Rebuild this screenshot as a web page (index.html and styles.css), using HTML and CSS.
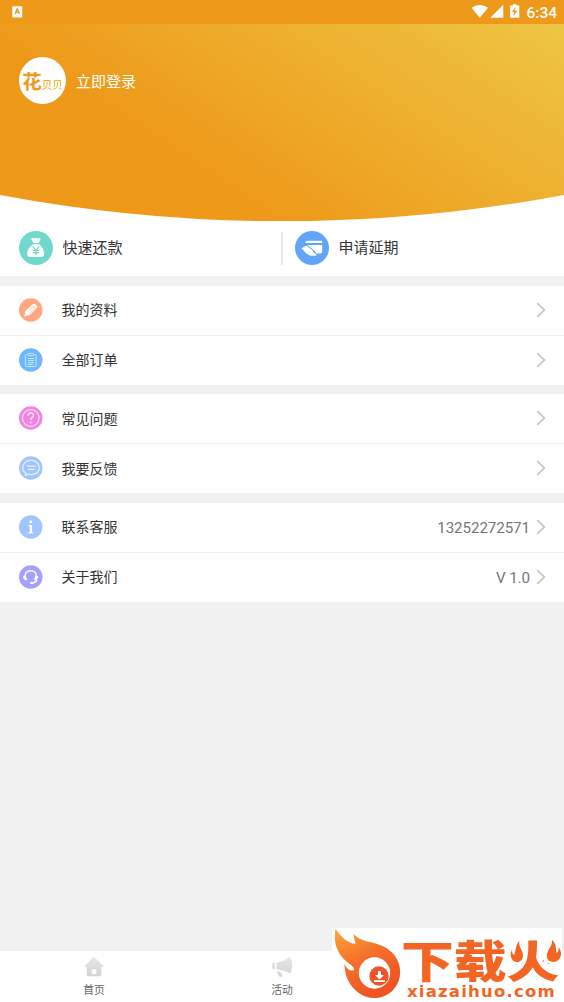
FILE: index.html
```html
<!DOCTYPE html>
<html lang="zh-CN">
<head>
<meta charset="utf-8">
<title>我的</title>
<link rel="stylesheet" href="styles.css">
</head>
<body>
<svg class="defs" width="0" height="0"><defs>
  <symbol id="chevron" viewBox="0 0 10 16"><path d="M1.2 1.200 8.400 8l-7.200 6.800" fill="none" stroke="#c8c8c8" stroke-width="1.800"/></symbol>
  <linearGradient id="grey" x2="0" y2="1"><stop stop-color="#e6e6e6"/><stop offset="1" stop-color="#d4d4d4"/></linearGradient>
</defs></svg>
<div class="screen">
  <header class="status">
    <svg width="11" height="12" viewBox="0 0 11 12"><rect x=".2" y=".2" width="10" height="11.3" rx="1" fill="#fff"/><path d="M3.200 8 5 3h.6l1.800 5M4 6.400h2.700" fill="none" stroke="#ee9919" stroke-width="1.300"/></svg>
    <div class="status-right">
      <svg width="49" height="15" viewBox="0 0 49 15" fill="#fff"><path d="M.5 3.800C5.300-.1 12.300-.1 17.100 3.800L8.800 13.800zM32.300.8v12.900H19.300zM41.800 1.500V.3h3.800v1.200h2.700v12.200h-9.200V1.500z"/><path d="m44.400 3-3.400 5h2l-.4 4 3.700-5.300h-2.200z" fill="#ee9919"/></svg>
      <span class="clock">6:34</span>
    </div>
  </header>

  <section class="hero">
    <svg class="hero-bg" width="564" height="198" viewBox="0 23.500 564 198"><defs><linearGradient id="sun" gradientUnits="userSpaceOnUse" x1="170" y1="150" x2="347" y2="-117"><stop stop-color="#ee9919"/><stop offset="1" stop-color="#eec544"/></linearGradient></defs><path d="M0 23.500H564V194.500Q282 247 0 194.500z" fill="url(#sun)"/></svg>
    <div class="profile">
      <div class="avatar"><span class="logo-main">花</span><span class="logo-sub">贝贝</span></div>
      <span class="login">立即登录</span>
    </div>
  </section>

  <section class="quick">
    <a class="quick-item">
      <svg width="34" height="34" viewBox="0 0 34 34"><circle cx="17" cy="17" r="17" fill="#6fd9cc"/><path d="M12 7.600q1.500-1 3 0 1.800-1.200 3.600 0 1.700-1 3.200-.1L19.800 12h-5.400z" fill="#fff"/><path d="M14 13.200h6.200c3 2.400 5.200 6 5 9.800q-.1 3-3 3H11.300q-3.200 0-3.200-3c0-4 2.700-7.600 5.900-9.800z" fill="#fff"/><path d="m13.700 15.400 3.200 4 3.200-4M13.500 19.500h6.800M13.500 21.700h6.800M16.900 19v5" fill="none" stroke="#6fd9cc" stroke-width="1.200"/></svg>
      <span>快速还款</span>
    </a>
    <i class="divider"></i>
    <a class="quick-item">
      <svg width="34" height="34" viewBox="0 0 34 34"><circle cx="17" cy="17" r="17" fill="#61a5f5"/><path d="M11.500 9.800h14.700q1 0 1 1v1.200H10.200zM12 13.900h15.200v6.600q0 1.900-1.900 1.900h-4.400c-.7-3.300-4.500-4.500-8.900-8.500z" fill="#fff"/><path d="M6.500 17.600c1.500-.8 2.800-2.800 5-2.900 2.200 1.600 6 2.700 6.800 6.300l3 1.900v1.700c-4 .5-7.100.3-9.800-2-1.900-1.600-3-3.200-5-5z" fill="#fff"/><path d="M11.500 14.500c3 2.400 7 3.300 7.500 6.800l2.300 1.500" fill="none" stroke="#61a5f5" stroke-width=".8"/></svg>
      <span>申请延期</span>
    </a>
  </section>

  <section class="group">
    <a class="row"><svg class="icon" viewBox="0 0 24 24"><circle cx="12" cy="12" r="12" fill="#ffa880"/><path d="m5.100 18.600 1.700-5.700 7.500-7.100q1.100-.9 2.100.1l2 2q.9 1-.1 2l-7.300 7.200z" fill="#fff"/><path d="m9 13.500 5.500-5M10.700 15.200l5.500-5M13.200 7.400l3.900 4.100" stroke="#ffa880" stroke-width=".7"/></svg><span class="label">我的资料</span><svg class="chevron"><use href="#chevron"/></svg></a>
    <a class="row"><svg class="icon" viewBox="0 0 24 24"><circle cx="12" cy="12" r="12" fill="#6db8ff"/><g fill="none" stroke="#c7e4ff" stroke-width="1"><path d="M9 6.500H7.500q-1 0-1 1v10q0 1.200 1 1.200h9q1 0 1-1.200v-10q0-1-1-1H15"/><rect x="9" y="5.400" width="6" height="2.200" rx="1"/><path d="M9 10.500h6.500M9 12.600h6.500M9 14.700h6.500M9 16.600h5"/></g></svg><span class="label">全部订单</span><svg class="chevron"><use href="#chevron"/></svg></a>
  </section>

  <section class="group help">
    <a class="row"><svg class="icon" viewBox="0 0 24 24"><circle cx="12" cy="12" r="12" fill="#f085df"/><g fill="none" stroke="#ffd7fa" stroke-width="1.300"><circle cx="12" cy="12" r="8.500"/><path d="M9.300 9.800c0-4 5.500-3.700 5.500-.5 0 2.100-2.700 2.300-2.700 4.800" stroke-width="1.700"/></g><circle cx="12" cy="16.600" r="1.100" fill="#ffd7fa"/></svg><span class="label">常见问题</span><svg class="chevron"><use href="#chevron"/></svg></a>
    <a class="row"><svg class="icon" viewBox="0 0 24 24"><circle cx="12" cy="12" r="12" fill="#a3c5ff"/><path d="M6.500 17.200C.8 12 5 4.200 12.200 4.200c5.200 0 8.500 3.200 8.500 7.200 0 5.600-6 8.800-11.200 6.700-.8.800-1.500 1.200-2.700 1.300q.8-1.200-.3-2.200zM8.800 10.100h7.500M9.800 13.300h5.500" fill="none" stroke="#e5f1ff" stroke-width="1.300" stroke-linecap="round"/></svg><span class="label">我要反馈</span><svg class="chevron"><use href="#chevron"/></svg></a>
  </section>

  <section class="group">
    <a class="row"><svg class="icon" viewBox="0 0 24 24"><circle cx="12" cy="12" r="12" fill="#a3c5ff"/><circle cx="12" cy="6.700" r="1.600" fill="#fff"/><path d="M9.500 10h3.800v7.500h1.400v1.200H9.500v-1.200H11v-6.300H9.500z" fill="#fff"/></svg><span class="label">联系客服</span><span class="value">13252272571</span><svg class="chevron"><use href="#chevron"/></svg></a>
    <a class="row"><svg class="icon" viewBox="0 0 24 24"><circle cx="12" cy="12" r="12" fill="#a4a0ff"/><path d="M6.300 12C5 3.700 18.700 3.200 17.800 12M18.200 14.800q-.9 2.800-4.200 3.300" fill="none" stroke="#fff" stroke-width="1.400"/><path d="M4.500 11q2.200-1 2.700.4l1 2.700q.2 1.400-1.200 1.300c-2 0-3.400-3.100-2.500-4.400zM19.200 11q-2.200-1-2.700.4l-1 2.700q-.2 1.400 1.200 1.300c2 0 3.400-3.100 2.500-4.400z" fill="#fff"/><ellipse cx="13.200" cy="18" rx="2" ry="1.200" fill="#fff"/></svg><span class="label">关于我们</span><span class="value">V 1.0</span><svg class="chevron"><use href="#chevron"/></svg></a>
  </section>

  <nav class="tabs">
    <a class="tab"><svg width="20" height="20" viewBox="0 0 20 20"><path d="M9 .7q1-.9 2 0l8.600 8.500q.5.800-.7.800H17.300v7.800q0 1.500-1.500 1.500H4.200q-1.500 0-1.500-1.500V10H1.100Q0 10 .4 9.200zM7.800 17h4.600v-3c0-2.800-4.600-2.800-4.600 0z" fill="url(#grey)" fill-rule="evenodd"/></svg><span>首页</span></a>
    <a class="tab"><svg width="22" height="20" viewBox="0 0 22 20" fill="url(#grey)"><path d="M5.500 5.400C10 5 14 3.600 17.600.6q1.300-.7 2 .5c2.200 4.300 2.100 9.600.2 14.500q-.8 1.200-2 .4C14 13.700 10 12.800 5.500 12.500zM3.900 5.600v6.800Q1 12.800 1 9t2.900-3.400zM5.400 13.900l4 .8 2.300 4.300-2 .9q-1.100.2-1.600-.7z"/></svg><span>活动</span></a>
    <a class="tab"></a>
  </nav>

  <aside class="watermark">
    <svg class="flame" width="69" height="74" viewBox="0 0 69 74"><defs><linearGradient id="fire" x1="0" y1="0" x2=".5" y2="1"><stop stop-color="#ffa43b"/><stop offset=".55" stop-color="#f36c2a"/><stop offset="1" stop-color="#ee5423"/></linearGradient></defs><path d="M3.500 1C10 10 16 15.500 23.700 15.700q-2-5.500-2-10C29 16 48 12 60 24.500c10 10 11 26 2 36.500-9.500 11-25.500 12-36.500 3C16 56.500 12.300 45 12.500 35.500c1.500 4.500 4.500 7.500 9 7q1.700-2-1.600-4.800C5 28 1 15 3.500 1z" fill="url(#fire)"/><circle cx="42.500" cy="45" r="15.700" fill="#fff"/><circle cx="47" cy="48" r="9.700" fill="#ee5425"/><path d="M46 43h3v4h3l-4.500 4.500L43 47h3zM42 52.300h11v1.800H42z" fill="#fff"/></svg>
    <div class="brand">
      <span class="brand-name">下载火</span>
      <span class="brand-url">xiazaihuo.com</span>
    </div>
    <svg class="sparks" width="54" height="26" viewBox="0 0 54 26"><path d="M1 5v20h13l3-3V5zM32 1v15l4 7h17V1z" fill="#fff"/><path d="M10.500 1c-1.500 6 3.500 9 3.500 14 0 5-3 7-5.500 7C3.500 22 0 17 2.500 10c.5 3 1 4 2.500 5C7.500 10 6 5 10.500 1zM43 0c5 4 3.500 9 4.500 13 2-1 2.500-3 2-6 5 6 2 15-5 15-4.500 0-7.500-3-6.500-8 1-5 5.500-8 5-14z" fill="#f36523"/></svg>
  </aside>
</div>
</body>
</html>
```
FILE: styles.css
```css
* { box-sizing: border-box; }
body { margin: 0; font-family: Roboto, "Noto Sans CJK SC", sans-serif; color: #333; background: #f1f1f1; }
.defs { position: absolute; }
.screen { position: relative; width: 564px; height: 1002px; display: flex; flex-direction: column; overflow: hidden; background: #f1f1f1; }
.status { height: 23.5px; flex: none; display: flex; justify-content: space-between; align-items: center; padding: 0 7px 0 12px; background: #ee9919; }
.status-right { display: flex; align-items: center; gap: 6px; color: #fff; }
.clock { font-size: 15.5px; line-height: 23px; padding-top: 3px; font-weight: 500; }
.hero { height: 197.5px; flex: none; display: grid; background: #fff; }
.hero-bg, .profile { grid-area: 1 / 1; }
.hero-bg { display: block; }
.profile { position: relative; display: flex; align-items: center; align-self: start; gap: 10px; padding: 33.5px 0 0 19px; }
.avatar { width: 47px; height: 47px; border-radius: 50%; background: #fff; display: flex; align-items: baseline; justify-content: center; color: #ee9a1b; line-height: 51px; white-space: nowrap; }
.logo-main { font-size: 19.5px; font-weight: 700; }
.logo-sub { font-size: 10.5px; font-weight: 500; background: linear-gradient(90deg, #eda329, #ecc342); -webkit-background-clip: text; color: transparent; }
.login { font-size: 15px; line-height: 22px; color: #fff; padding-top: 2px; }
.quick { height: 55px; flex: none; display: flex; align-items: center; background: #fff; padding-bottom: 1px; }
.quick-item { display: flex; align-items: center; gap: 9.5px; width: 281px; padding-left: 19px; font-size: 15px; line-height: 20px; }
.quick-item + .divider + .quick-item { padding-left: 11.5px; gap: 10px; }
.divider { width: 2px; height: 33px; background: #e7e7e7; }
.group { flex: none; margin-top: 9.5px; height: 99px; background: #fff; }
.row { height: 49.5px; display: flex; align-items: center; padding: 0 18.5px 0 19px; }
.row:first-child { border-bottom: 1px solid #f0f0f0; height: 50px; }
.row:last-child { height: 49px; }
.icon { width: 23.5px; height: 24px; flex: none; }
.label { margin-left: 19px; font-size: 14px; line-height: 22px; flex: 1; }
.help .icon, .help .chevron { margin-bottom: 1px; }
.value { font-size: 15.2px; line-height: 22px; color: #777; margin-right: 5.5px; padding-top: 2px; letter-spacing: -.1px; }
.chevron { width: 10px; height: 16px; }
.tabs { margin-top: auto; flex: none; height: 51px; display: grid; grid-template-columns: repeat(3, 1fr); background: #fff; }
.tab { display: flex; flex-direction: column; align-items: center; padding-top: 6px; font-size: 10.8px; line-height: 16px; color: #666; gap: 6px; }
.watermark { position: absolute; left: 332px; top: 928px; width: 230px; height: 74px; background: #fff; display: flex; }
.flame { flex: none; }
.brand { color: #f36523; width: 158px; height: 74px; display: flex; flex-direction: column; padding-top: 9px; }
.brand-name { width: 132px; height: 45px; font-family: "Noto Sans CJK SC", sans-serif; font-size: 44px; line-height: 45px; font-weight: 900; white-space: nowrap; transform: scaleX(1.2); transform-origin: left; }
.brand-url { font-family: "DejaVu Sans", sans-serif; font-weight: bold; font-size: 16.5px; line-height: 16px; letter-spacing: 1.2px; padding-left: 6px; margin-top: 2px; }
.sparks { position: absolute; left: 177px; top: 12px; }
```
